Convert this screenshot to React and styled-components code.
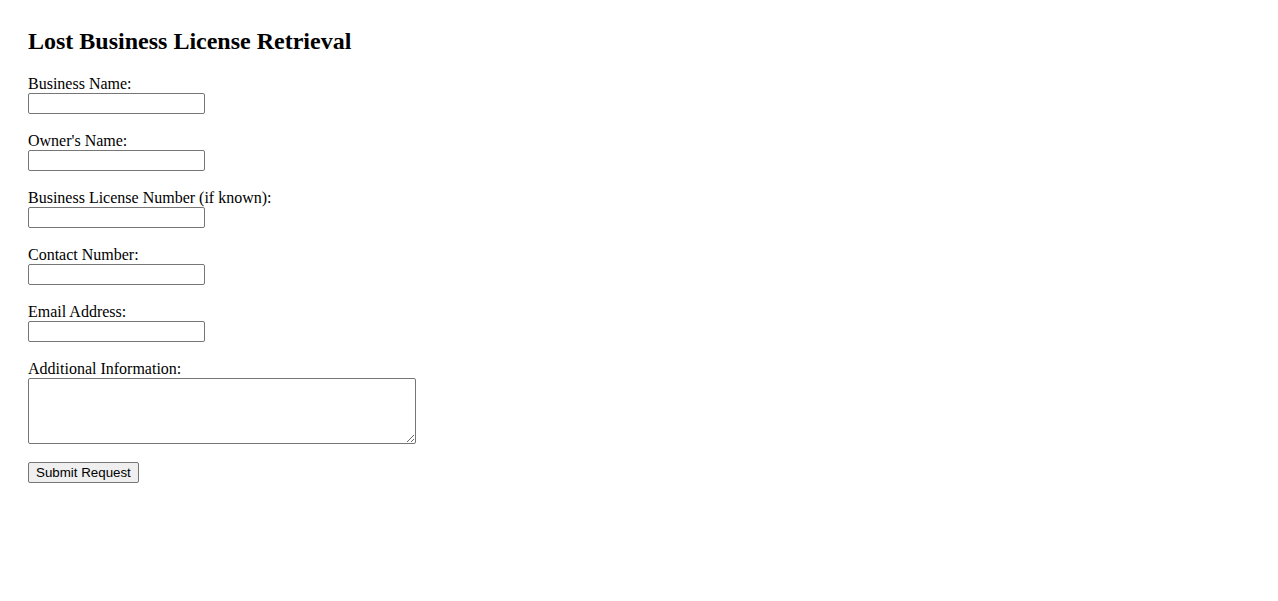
import React from "react";
import styled, { createGlobalStyle } from "styled-components";

const Global = createGlobalStyle`
  html, body { margin: 0; padding: 0; background: #fff; }
  body { font-family: "Liberation Serif", "Times New Roman", serif; color: #000; }
`;

const Page = styled.div`
  padding: 28px;
`;

const Title = styled.h2`
  margin: 0 0 19.9px;
  font-size: 24px;
  font-weight: bold;
  line-height: 27.6px;
  font-family: "Liberation Serif", "Times New Roman", serif;
`;

const Form = styled.form`
  display: flex;
  flex-direction: column;
  align-items: flex-start;
`;

const Field = styled.div`
  display: flex;
  flex-direction: column;
  align-items: flex-start;
  margin-bottom: ${(p) => (p.$gap ? p.$gap : 18)}px;
`;

const Label = styled.label`
  font-size: 16px;
  line-height: 18px;
  height: 18px;
`;

const Input = styled.input`
  box-sizing: border-box;
  width: 177px;
  height: 21px;
  margin: 0;
  padding: 1px 2px;
  border: 1px solid #767676;
  border-radius: 2px;
  background: #fff;
  font-family: "Liberation Sans", Arial, sans-serif;
  font-size: 13.33px;
`;

const TextArea = styled.textarea`
  box-sizing: border-box;
  width: 388px;
  height: 66px;
  margin: 0;
  padding: 2px;
  border: 1px solid #767676;
  border-radius: 2px;
  background: #fff;
  font-family: "Liberation Mono", monospace;
  font-size: 13.33px;
  resize: both;
  display: block;
`;

const Button = styled.button`
  box-sizing: border-box;
  height: 21px;
  margin: 0;
  padding: 0 7px;
  border: 1px solid #767676;
  border-radius: 2px;
  background: #efefef;
  color: #000;
  font-family: "Liberation Sans", Arial, sans-serif;
  font-size: 13.33px;
  line-height: 19px;
  cursor: default;
`;

const fields = [
  { id: "businessName", label: "Business Name:" },
  { id: "ownerName", label: "Owner's Name:" },
  { id: "licenseNumber", label: "Business License Number (if known):" },
  { id: "contactNumber", label: "Contact Number:" },
  { id: "email", label: "Email Address:" },
];

export default function App() {
  return (
    <Page>
      <Global />
      <Title>Lost Business License Retrieval</Title>
      <Form onSubmit={(e) => e.preventDefault()}>
        {fields.map((f) => (
          <Field key={f.id}>
            <Label htmlFor={f.id}>{f.label}</Label>
            <Input id={f.id} type="text" />
          </Field>
        ))}
        <Field $gap={18}>
          <Label htmlFor="info">Additional Information:</Label>
          <TextArea id="info" />
        </Field>
        <Button type="submit">Submit Request</Button>
      </Form>
    </Page>
  );
}
